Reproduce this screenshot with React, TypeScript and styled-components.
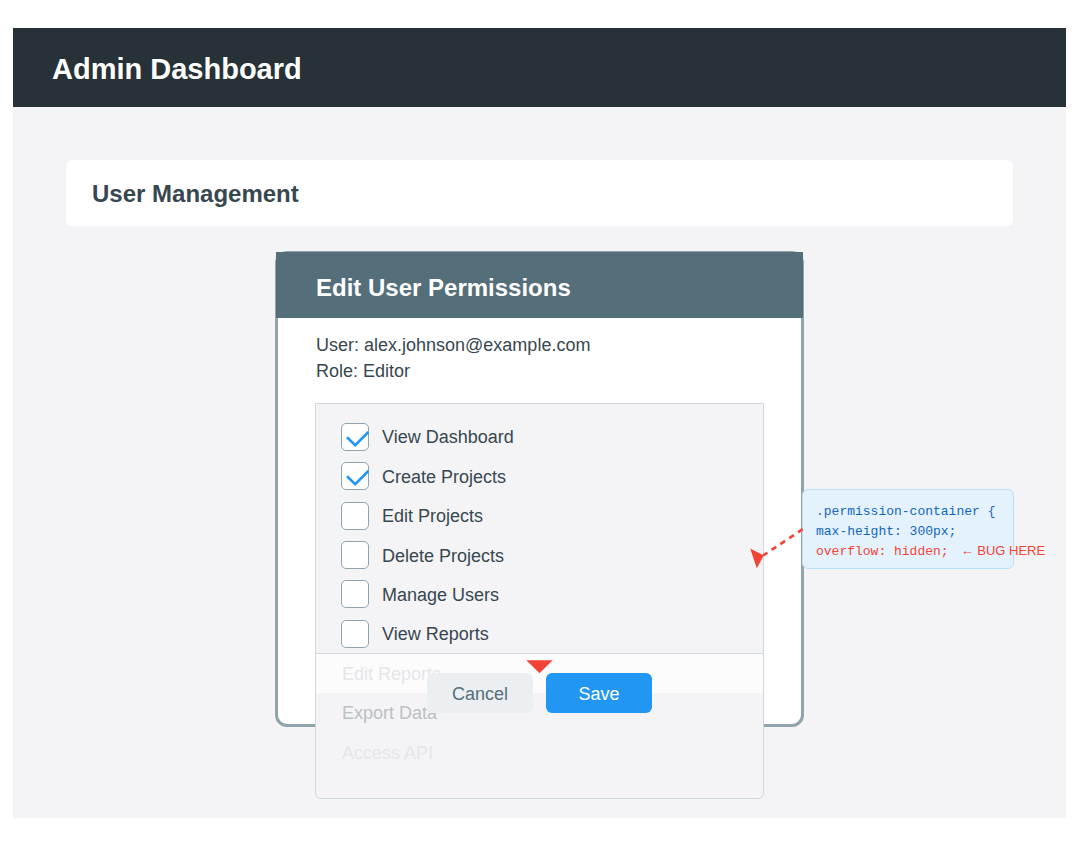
import React, { useState } from "react";
import styled, { createGlobalStyle, css } from "styled-components";

const GlobalStyle = createGlobalStyle`
  *, *::before, *::after { box-sizing: border-box; }
  body {
    margin: 0;
    background: #ffffff;
    color: #37474f;
    font-family: "Liberation Sans", Arial, sans-serif;
    font-size: 18px;
  }
`;

const Page = styled.div`
  padding: 28px 13px 23px;
`;

const Board = styled.div`
  background: #f4f4f7;
  padding-bottom: 91px;
`;

const TopBar = styled.header`
  display: flex;
  align-items: center;
  min-height: 79px;
  padding: 0 39px;
  background: #263238;
  color: #ffffff;
`;

const AppTitle = styled.h1`
  margin: 0;
  padding-top: 2px;
  font-size: 29px;
  line-height: 36px;
`;

const Content = styled.main`
  display: flex;
  flex-direction: column;
  align-items: center;
  gap: 25px;
  padding: 53px 53px 0;
`;

const SectionCard = styled.section`
  align-self: stretch;
  padding: 20px 26px 18px;
  border-radius: 6px;
  background: #ffffff;
`;

const SectionTitle = styled.h2`
  margin: 0;
  font-size: 24px;
  line-height: 28px;
`;

const Dialog = styled.section`
  position: relative;
  width: 529px;
  height: 476px;
  border: 3px solid #90a4ae;
  border-radius: 12px;
  background: #ffffff;
`;

const DialogHeader = styled.div`
  margin: -2px -2px 0;
  padding: 22px 40px 16px;
  background: #546e7a;
  color: #ffffff;
`;

const DialogBody = styled.div`
  padding: 14px 37px 0;
`;

const UserInfo = styled.div`
  margin-bottom: 19px;
  padding-left: 1px;
  line-height: 26px;
`;

const PermissionList = styled.ul`
  display: grid;
  grid-auto-rows: 1fr;
  height: 396px;
  margin: 0;
  padding: 13px 0 26px;
  border: 1px solid #cfd8dc;
  border-radius: 0 0 6px 6px;
  background: #f4f4f7;
  list-style: none;
`;

type RowState = "shown" | "cut" | "dim" | "faint";

const rowStyles = {
  shown: css``,
  cut: css`
    background: #fcfcfd;
    box-shadow: 0 -1px #cfd8dc;
    color: #e4e6e8;
  `,
  dim: css`
    color: #bbc0c4;
  `,
  faint: css`
    color: #e4e6e8;
  `,
};

const PermissionRow = styled.li<{ $state: RowState }>`
  display: flex;
  align-items: center;
  padding: 0 26px 0 25px;
  ${({ $state }) => rowStyles[$state]}
`;

const PermissionLabel = styled.label`
  display: flex;
  align-items: center;
  gap: 12px;
`;

const PermissionName = styled.span`
  padding: 2px 0 0 1px;
`;

const CheckField = styled.span`
  display: grid;
  width: 28px;
  height: 28px;

  > * {
    grid-area: 1 / 1;
  }
`;

const CheckInput = styled.input`
  appearance: none;
  width: 28px;
  height: 28px;
  margin: 0;
  border: 1px solid #90a4ae;
  border-radius: 5px;
  background: #ffffff;
`;

const CheckMark = styled.svg`
  pointer-events: none;
`;

const Footer = styled.div`
  position: absolute;
  right: 0;
  bottom: 11px;
  left: 0;
  display: flex;
  flex-direction: column;
  align-items: center;
`;

const Actions = styled.div`
  display: flex;
  gap: 13px;
`;

const ActionButton = styled.button<{ $primary?: boolean }>`
  width: 106px;
  height: 40px;
  padding: 2px 0 0;
  border: 0;
  border-radius: 6px;
  background: ${({ $primary }) => ($primary ? "#2196f3" : "#eceff1")};
  color: ${({ $primary }) => ($primary ? "#ffffff" : "#546e7a")};
  font: inherit;
`;

const Connector = styled.svg`
  position: absolute;
  top: 266px;
  left: 467px;
`;

const CodeNote = styled.aside`
  position: absolute;
  top: 235px;
  left: 524px;
  width: 212px;
  padding: 12px 13px 6px;
  border: 1px solid #bbdefb;
  border-radius: 6px;
  background: #e3f2fd;
  color: #1565c0;
  font-family: "Liberation Mono", "Courier New", monospace;
  font-size: 13px;
  line-height: 20px;
  white-space: nowrap;
`;

const CodeLine = styled.div<{ $bug?: boolean }>`
  display: flex;
  gap: 12px;
  color: ${({ $bug }) => ($bug ? "#f44336" : "inherit")};
`;

const BugTag = styled.span`
  font-family: "Liberation Sans", Arial, sans-serif;
  line-height: 18px;
`;

const permissions: { name: string; state: RowState }[] = [
  { name: "View Dashboard", state: "shown" },
  { name: "Create Projects", state: "shown" },
  { name: "Edit Projects", state: "shown" },
  { name: "Delete Projects", state: "shown" },
  { name: "Manage Users", state: "shown" },
  { name: "View Reports", state: "shown" },
  { name: "Edit Reports", state: "cut" },
  { name: "Export Data", state: "dim" },
  { name: "Access API", state: "faint" },
];

export default function App() {
  const [granted, setGranted] = useState<string[]>(["View Dashboard", "Create Projects"]);

  const toggle = (name: string) =>
    setGranted((list) => (list.includes(name) ? list.filter((n) => n !== name) : [...list, name]));

  return (
    <Page>
      <GlobalStyle />
      <Board>
        <TopBar>
          <AppTitle>Admin Dashboard</AppTitle>
        </TopBar>
        <Content>
          <SectionCard>
            <SectionTitle>User Management</SectionTitle>
          </SectionCard>
          <Dialog aria-labelledby="dialog-title">
            <DialogHeader>
              <SectionTitle id="dialog-title">Edit User Permissions</SectionTitle>
            </DialogHeader>
            <DialogBody>
              <UserInfo>
                <div>User: alex.johnson@example.com</div>
                <div>Role: Editor</div>
              </UserInfo>
              <PermissionList>
                {permissions.map(({ name, state }) => (
                  <PermissionRow key={name} $state={state}>
                    {state === "shown" ? (
                      <PermissionLabel>
                        <CheckField>
                          <CheckInput
                            type="checkbox"
                            checked={granted.includes(name)}
                            onChange={() => toggle(name)}
                          />
                          {granted.includes(name) && (
                            <CheckMark width="28" height="28" viewBox="0 0 28 28" fill="none" aria-hidden="true">
                              <path d="M6 14.3 14.2 22.2 27.4 9" stroke="#2196f3" strokeWidth="2.6" />
                            </CheckMark>
                          )}
                        </CheckField>
                        <PermissionName>{name}</PermissionName>
                      </PermissionLabel>
                    ) : (
                      <PermissionName>{name}</PermissionName>
                    )}
                  </PermissionRow>
                ))}
              </PermissionList>
            </DialogBody>
            <Footer>
              <svg width="27" height="13" viewBox="0 0 27 13" aria-hidden="true">
                <path d="M.3 .2H26.7L13.5 13.2Z" fill="#f44336" />
              </svg>
              <Actions>
                <ActionButton type="button">Cancel</ActionButton>
                <ActionButton type="button" $primary>
                  Save
                </ActionButton>
              </Actions>
            </Footer>
            <CodeNote>
              <CodeLine>.permission-container {"{"}</CodeLine>
              <CodeLine>max-height: 300px;</CodeLine>
              <CodeLine $bug>
                overflow: hidden;
                <BugTag>← BUG HERE</BugTag>
              </CodeLine>
            </CodeNote>
            <Connector width="60" height="52" viewBox="0 0 60 52" fill="none" aria-hidden="true">
              <path d="M57.7 9.2 18.2 35.5" stroke="#f44336" strokeWidth="2.6" strokeDasharray="5.6 5" />
              <path d="M5.2 28.5 18.8 35.5 11.8 48.3Z" fill="#f44336" />
            </Connector>
          </Dialog>
        </Content>
      </Board>
    </Page>
  );
}
